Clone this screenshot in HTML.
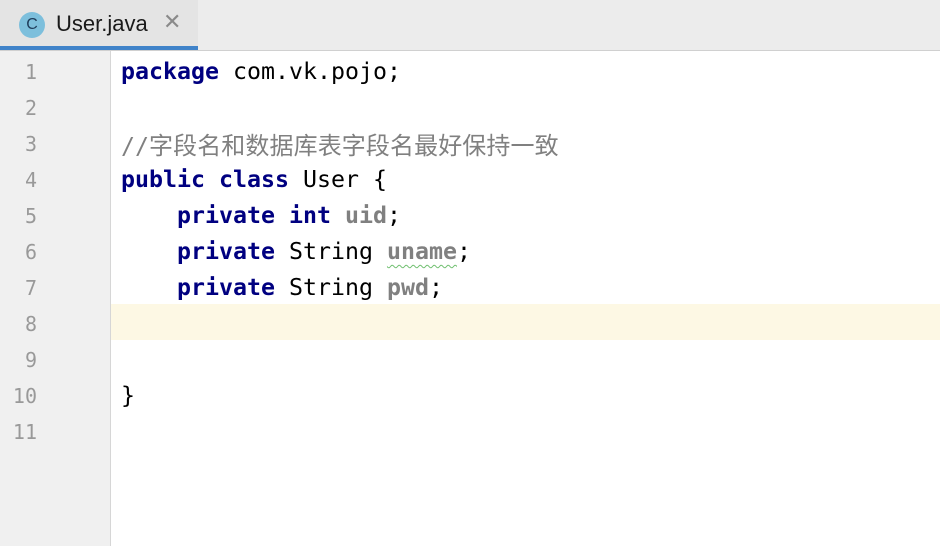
<!DOCTYPE html>
<html><head><style>
body{margin:0;width:940px;height:546px;overflow:hidden;background:#fff;font-family:"DejaVu Sans Mono",monospace;}
.tabbar{position:absolute;left:0;top:0;width:940px;height:50px;background:#ececec;border-bottom:1px solid #d0d0d0;}
.tab{position:absolute;left:0;top:0;width:198px;height:46px;background:#e4e4e4;border-bottom:4px solid #4083c9;}
.icon{position:absolute;left:19px;top:12px;width:26px;height:26px;border-radius:50%;background:#7dbfdc;color:#1e3c5a;font:16px "Liberation Sans",sans-serif;text-align:center;line-height:26px;}
.tname{position:absolute;left:56px;top:11px;font:22px "Liberation Sans",sans-serif;color:#1a1a1a;}
.x{position:absolute;left:163px;top:9px;font:22px "Liberation Sans",sans-serif;color:#8a8a8a;}
.gutter{position:absolute;left:0;top:51px;width:110px;height:495px;background:#f0f0f0;border-right:1px solid #d6d6d6;}
.hl{position:absolute;left:111px;top:304px;width:829px;height:36px;background:#fdf8e4;}
.ln{position:absolute;left:0;width:37px;text-align:right;font-size:20px;color:#999;line-height:36px;}
.code{position:absolute;left:121px;font-size:23.25px;line-height:36px;color:#000;white-space:pre;}
.k{color:#000080;font-weight:bold}
.f{color:#808080;font-weight:bold}
.c{color:#808080;}
.cj{font-family:"Noto Sans CJK SC",sans-serif;font-size:24px;letter-spacing:0.1px;}
.w{text-decoration:underline wavy #6fbf6f;text-underline-offset:5px;text-decoration-thickness:1px}
</style></head><body>
<div class="tabbar"><div class="tab"><div class="icon">C</div><div class="tname">User.java</div><div class="x">✕</div></div></div>
<div class="gutter"></div>
<div class="hl"></div>
<div class="ln" style="top:54px">1</div>
<div class="ln" style="top:90px">2</div>
<div class="ln" style="top:126px">3</div>
<div class="ln" style="top:162px">4</div>
<div class="ln" style="top:198px">5</div>
<div class="ln" style="top:234px">6</div>
<div class="ln" style="top:270px">7</div>
<div class="ln" style="top:306px">8</div>
<div class="ln" style="top:342px">9</div>
<div class="ln" style="top:378px">10</div>
<div class="ln" style="top:414px">11</div>
<div class="code" style="top:54px"><span class="k">package</span> com.vk.pojo;</div>
<div class="code c" style="top:126px">//<span class="cj">字段名和数据库表字段名最好保持一致</span></div>
<div class="code" style="top:162px"><span class="k">public class</span> User {</div>
<div class="code" style="top:198px">    <span class="k">private int</span> <span class="f">uid</span>;</div>
<div class="code" style="top:234px">    <span class="k">private</span> String <span class="f w">uname</span>;</div>
<div class="code" style="top:270px">    <span class="k">private</span> String <span class="f">pwd</span>;</div>
<div class="code" style="top:378px">}</div>
</body></html>
